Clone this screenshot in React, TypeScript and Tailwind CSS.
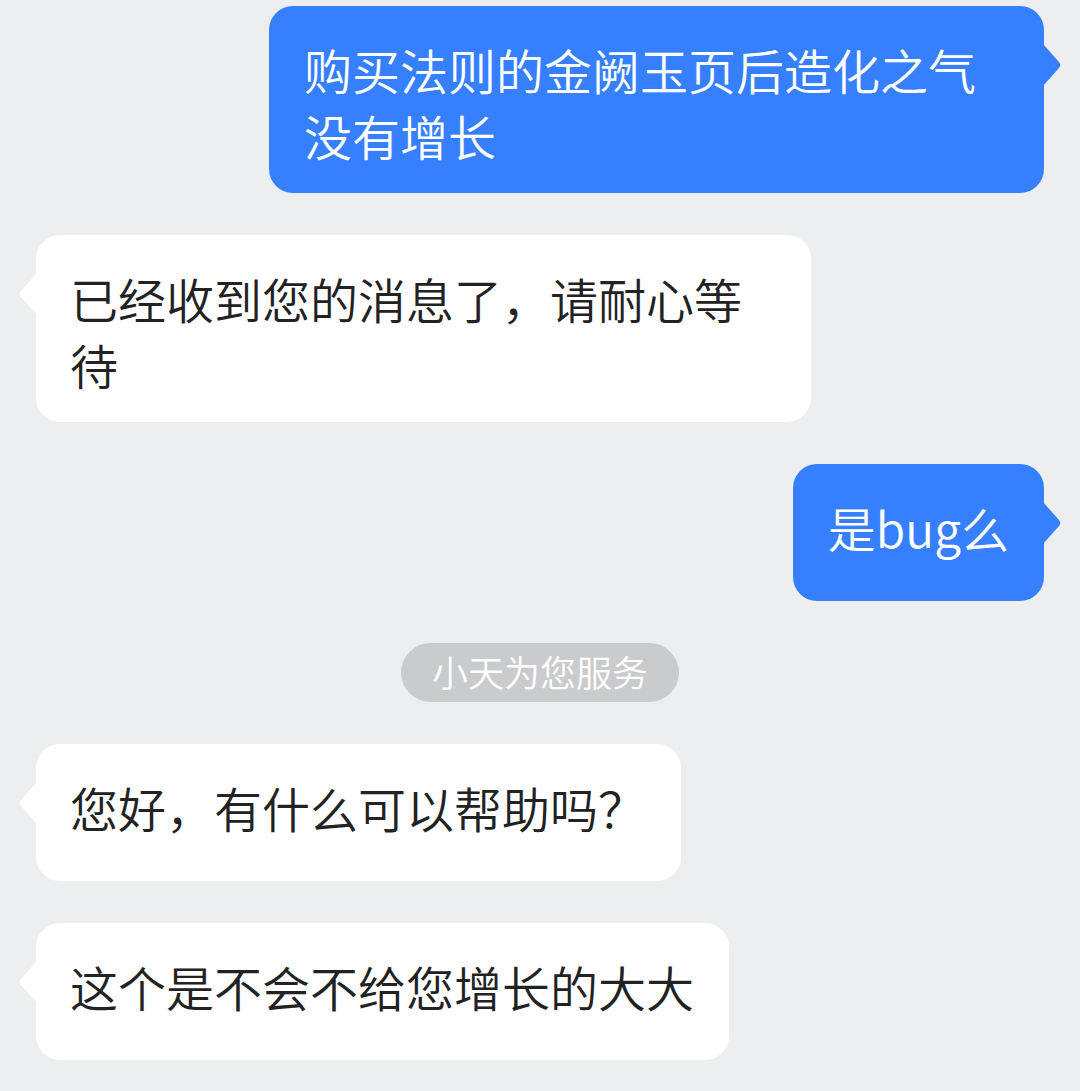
import React from "react";

const FONT = { fontFamily: '"Noto Sans CJK SC", "Noto Sans", sans-serif' };

function TailRight({ color }: { color: string }) {
  return (
    <svg
      className="absolute top-[38px] left-[calc(100%-1px)]"
      width="19"
      height="42"
      viewBox="0 0 19 42"
    >
      <path d="M0 0 L16 18 Q18.5 21 16 24 L0 42 Z" fill={color} />
    </svg>
  );
}

function TailLeft({ color }: { color: string }) {
  return (
    <svg
      className="absolute top-[38px] right-[calc(100%-1px)]"
      width="19"
      height="42"
      viewBox="0 0 19 42"
    >
      <path d="M19 0 L3 18 Q0.5 21 3 24 L19 42 Z" fill={color} />
    </svg>
  );
}

function Mine({ text }: { text: string }) {
  return (
    <div className="flex justify-end">
      <div className="relative max-w-[775px] min-h-[137px] rounded-[24px] bg-[#3680FF] pl-[35px] pr-[35px] pt-[30px] pb-[25px] text-[48px] font-[350] leading-[66px] text-white">
        {text}
        <TailRight color="#3680FF" />
      </div>
    </div>
  );
}

function Theirs({ text }: { text: string }) {
  return (
    <div className="flex justify-start">
      <div className="relative max-w-[775px] min-h-[137px] rounded-[24px] bg-white pl-[34px] pr-[35px] pt-[30px] pb-[25px] text-[48px] font-[350] leading-[66px] text-[#222222]">
        {text}
        <TailLeft color="#ffffff" />
      </div>
    </div>
  );
}

export default function App() {
  return (
    <div
      className="min-h-[1091px] w-full overflow-hidden bg-[#EDEEF0] px-[36px] pt-[6px] flex flex-col gap-[42px]"
      style={FONT}
    >
      <Mine text="购买法则的金阙玉页后造化之气没有增长" />
      <Theirs text="已经收到您的消息了，请耐心等待" />
      <Mine text="是bug么" />
      <div className="flex justify-center">
        <div className="h-[59px] rounded-full bg-[#CACBCD] px-[31px] text-[36px] font-[350] leading-[57px] text-white">
          小天为您服务
        </div>
      </div>
      <Theirs text="您好，有什么可以帮助吗？" />
      <Theirs text="这个是不会不给您增长的大大" />
    </div>
  );
}
